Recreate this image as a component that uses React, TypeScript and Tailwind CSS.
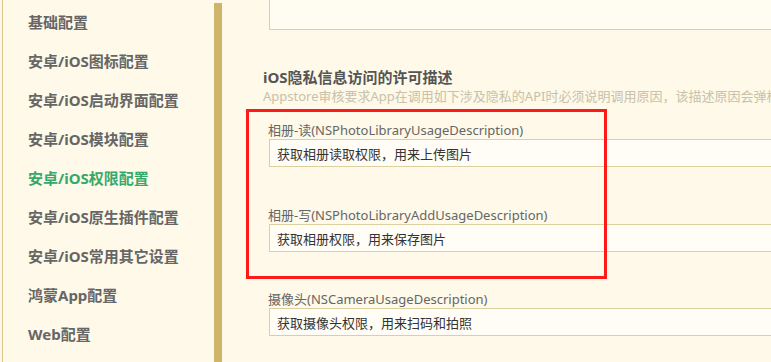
import React from 'react';

const menu = [
  '基础配置',
  '安卓/iOS图标配置',
  '安卓/iOS启动界面配置',
  '安卓/iOS模块配置',
  '安卓/iOS权限配置',
  '安卓/iOS原生插件配置',
  '安卓/iOS常用其它设置',
  '鸿蒙App配置',
  'Web配置',
];

const fields = [
  { label: '相册-读(NSPhotoLibraryUsageDescription)', value: '获取相册读取权限，用来上传图片', gap: 'mt-[16px]' },
  { label: '相册-写(NSPhotoLibraryAddUsageDescription)', value: '获取相册权限，用来保存图片', gap: 'mt-[39px]' },
  { label: '摄像头(NSCameraUsageDescription)', value: '获取摄像头权限，用来扫码和拍照', gap: 'mt-[38px]' },
];

export default function App() {
  return (
    <div
      className="relative flex w-[771px] h-[362px] overflow-hidden bg-[#fef9e8]"
      style={{ fontFamily: '"Noto Sans", "Noto Sans CJK SC", sans-serif' }}
    >
      {/* sidebar */}
      <div className="ml-[2px] w-[212px] shrink-0 border-l border-[#dcc88e] pt-[3px]">
        {menu.map((m, i) => (
          <div
            key={m}
            className={`flex h-[39px] items-center pl-[25px] text-[15px] font-bold ${i === 4 ? 'text-[#36a86a]' : 'text-[#666]'}`}
          >
            {m}
          </div>
        ))}
      </div>
      <div className="mt-[3px] w-[8px] shrink-0 bg-[#cfb46b]" />

      {/* main */}
      <div className="min-w-0 flex-1 overflow-hidden pl-[41px]">
        <div className="ml-[6px] mt-[-12px] h-[42px] w-[620px] border border-[#ddd0a0] bg-[#fffcf2]" />
        <div className="mt-[37px] text-[15px] font-bold leading-[20px] text-[#555]">iOS隐私信息访问的许可描述</div>
        <div className="whitespace-nowrap text-[13px] leading-[18px] text-[#c9c1a9]">
          Appstore审核要求App在调用如下涉及隐私的API时必须说明调用原因，该描述原因会弹框给最终用户查看
        </div>
        {fields.map((f) => (
          <div key={f.label} className={`${f.gap} pl-[5px]`}>
            <div className="whitespace-nowrap text-[13px] leading-[18px] text-[#666]">{f.label}</div>
            <input
              readOnly
              value={f.value}
              className="ml-[1px] block h-[28px] w-[620px] border border-[#ddd0a0] bg-[#fffdf5] pl-[7px] text-[13px] text-[#333] outline-none"
            />
          </div>
        ))}
      </div>

      {/* annotation */}
      <div className="absolute left-[246px] top-[109px] h-[170px] w-[361px] border-[3px] border-[#ff1a1a]" />
    </div>
  );
}
